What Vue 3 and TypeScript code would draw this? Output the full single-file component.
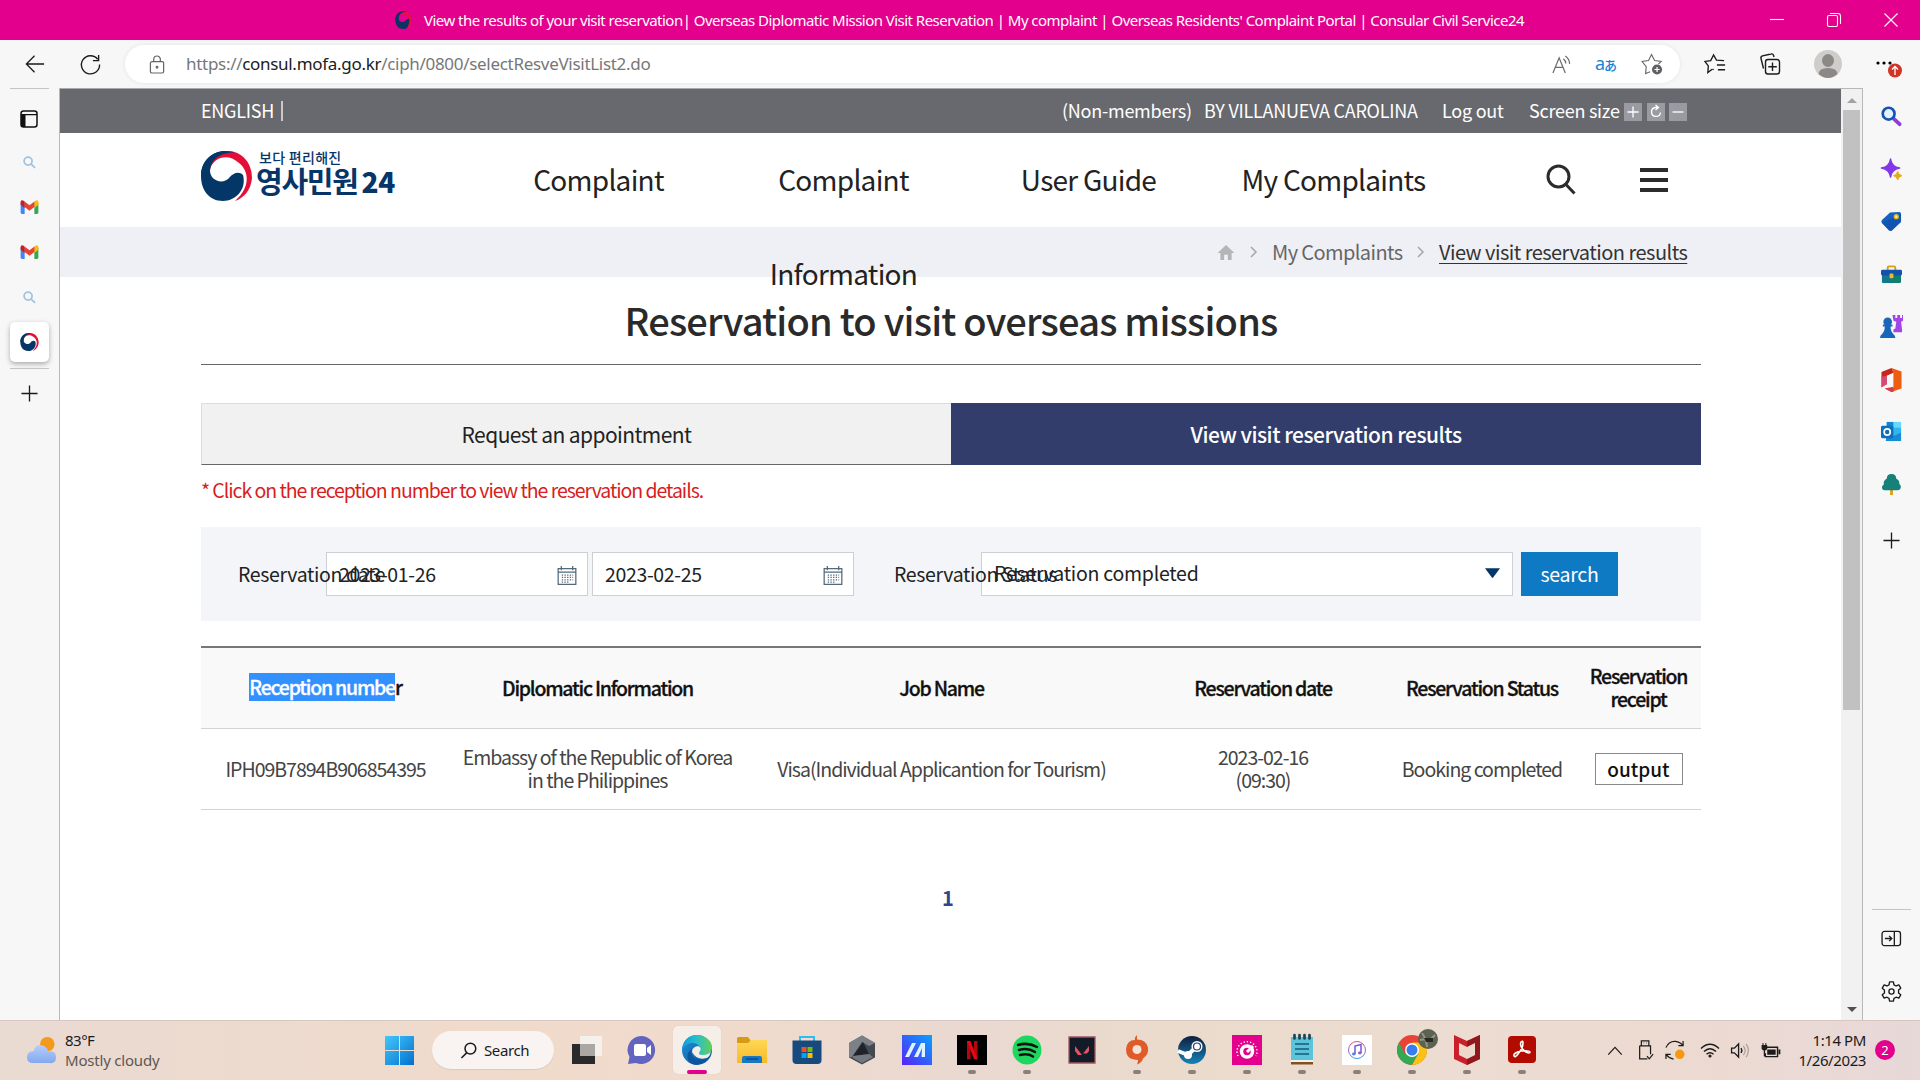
<script setup lang="ts">
interface Column {
  key: string
  width: number
  lines: string[]
}

const columns: Column[] = [
  { key: 'diplomatic', width: 295, lines: ['Diplomatic Information'] },
  { key: 'job', width: 393, lines: ['Job Name'] },
  { key: 'date', width: 250, lines: ['Reservation date'] },
  { key: 'status', width: 188, lines: ['Reservation Status'] },
  { key: 'receipt', width: 125, lines: ['Reservation', 'receipt'] },
]

const dates: string[] = ['2023-01-26', '2023-02-25']
</script>

<template>
  <div class="screen">
    <header class="titlebar">
      <svg class="title-icon" viewBox="0 0 50 50"><path d="M5 25C5 9 17 0 29 0 21 1 14 9 14 18c-1 12 13 16 19 9 4-5 10-7 14-3 0 15-8 26-20 26C13 50 5 39 5 25Z" fill="#0b3465" /><path d="M19 3C38-4 52 10 50 29c-1 11-7 18-13 20 9-14 9-29 0-37C30 5 19 6 14 14c0-5 2-9 5-11Z" fill="#e5123e" /><path d="M5 25C5 10 17 0 29 0q6 0 10 2C26 1 14 7 14 22Z" fill="#0b3465" /></svg>
      <span class="page-title">View the results of your visit reservation| Overseas Diplomatic Mission Visit Reservation | My complaint | Overseas Residents' Complaint Portal | Consular Civil Service24</span>
      <div class="window-controls">
        <svg viewBox="0 0 16 16"><path d="M1 7.500h14" /></svg>
        <svg viewBox="0 0 16 16"><rect x="1.500" y="3.500" width="10" height="11" rx="1.500" /><path d="M4 1.500h8q2.500 0 2.500 2.500v8" /></svg>
        <svg viewBox="0 0 16 16"><path d="M1.500 1.500l13 13M14.500 1.500l-13 13" /></svg>
      </div>
    </header>

    <div class="toolbar">
      <svg class="back line" viewBox="0 0 22 22"><path d="M21 11H1.500M10.500 2 1.500 11l9 9" /></svg>
      <svg class="reload line" viewBox="0 0 22 22"><path d="M18.500 5.500A9.500 9.500 0 1 0 20.500 11M19.500 1v6h-6" /></svg>
      <div class="address">
        <svg class="lock" viewBox="0 0 18 20"><rect x="1.500" y="7" width="14" height="12" rx="1.500" /><path d="M5 7V4.500a3.500 3.500 0 0 1 7 0V7" /><circle cx="8.500" cy="13" r=".9" /></svg>
        <span class="url">https://<b>consul.mofa.go.kr</b>/ciph/0800/selectResveVisitList2.do</span>
        <svg class="addr-icon read" viewBox="0 0 20 20"><path d="M1 19 7.500 3 14 19M3.500 13h8M12 4q2.500 2 2.500 5M14 1q4.500 3 4.500 8.500" /></svg>
        <span class="translate">a<i>あ</i></span>
        <svg class="addr-icon star" viewBox="0 0 24 24"><path d="M10 20.500 5 22.500 5.700 15 1.200 9.300 8.200 8.200 11.500 1.700l3.300 6.500 7.200 1-3 3" /><circle cx="17.500" cy="18" r="5.500" fill="#5f6063" stroke="none" /><path d="M17.500 15.200v5.600M14.700 18h5.600" stroke="#fff" /></svg>
      </div>
      <svg class="fav line" viewBox="0 0 24 22"><path d="M8.500 16.500 4 20 4.500 13 1 8.300 7 7.500 10 1.500l3 5.500 8 .5M13.500 12H22M14.500 17H22M9 16.300l1 .7" /></svg>
      <svg class="collect line" viewBox="0 0 22 22"><path d="M4.500 15.500 2 5.500q-.5-2 1.500-2.600L12 1q2-.5 2.600 1.500L15 4" /><rect x="6.500" y="6.500" width="14" height="14.500" rx="2.500" /><path d="M13.500 9.500v8.500M9.300 13.700h8.500" /></svg>
      <svg class="avatar" viewBox="0 0 28 28"><circle cx="14" cy="14" r="14" fill="#cfcdcb" /><ellipse cx="14" cy="10.500" rx="6" ry="6.500" fill="#8b8886" /><path d="M4.500 24Q5 18 14 18t9.500 6Q19 28 14 28t-9.500-4Z" fill="#8b8886" /></svg>
      <svg class="more" viewBox="0 0 26 30"><circle cx="2" cy="14" r="1.600" /><circle cx="8" cy="14" r="1.600" /><circle cx="14" cy="14" r="1.600" /><circle cx="19" cy="21.500" r="7" fill="#d13425" /><path d="M19 26v-8M16 20.500l3-3 3 3" fill="none" stroke="#fff" stroke-width="1.300" /></svg>
    </div>

    <div class="middle">
      <aside class="tabs-rail">
        <div class="rail-line"></div>
        <svg class="r-panel" viewBox="0 0 18 18"><rect x="1" y="1" width="16" height="16" rx="2.500" fill="none" stroke="#111" stroke-width="1.500" /><path d="M1 4.500h4.500V17H3q-2 0-2-2ZM1 4h16v1.300H1Z" fill="#111" /></svg>
        <svg class="r-search" viewBox="0 0 14 14"><circle cx="5.500" cy="5.500" r="4.300" /><path d="m8.800 8.800 4.200 4" /></svg>
        <svg v-for="n in 2" :key="n" class="r-mail" viewBox="0 0 19 15"><path d="M0 3h4.300v12H1.500Q0 15 0 13.500Z" fill="#4285f4" /><path d="M14.700 3H19v10.500q0 1.500-1.500 1.500h-2.800Z" fill="#34a853" /><path d="M14.700 6V1.500Q19-1.500 19 2.500V5l-4.300 3.500Z" fill="#fbbc04" /><path d="M4.300 7.500v-6l5.200 4 5.200-4v6l-5.200 4Z" fill="#ea4335" /><path d="M0 5V2.500Q0-1.500 4.300 1.500v7Z" fill="#c5221f" /></svg>
        <svg class="r-search last" viewBox="0 0 14 14"><circle cx="5.500" cy="5.500" r="4.300" /><path d="m8.800 8.800 4.200 4" /></svg>
        <div class="active-tab"><svg viewBox="0 0 51 50"><path d="M0 25C0 9 12 0 24 0 16 1 9 9 9 18c-1 12 13 16 19 9 4-5 10-7 14-3 4 15-8 26-20 26C8 50 0 39 0 25Z" fill="#053668" /><path d="M17 2C35-5 51 8 51 27 50 39 43 47 34 50 50 36 48 20 38 12 27 2 13 6 9 18 8 11 11 5 17 2Z" fill="#e40f38" /><path d="M0 25C0 10 12 0 24 0q6 0 10 1.500C21 1 9 7 9 22Z" fill="#053668" /></svg></div>
        <div class="rail-line"></div>
        <svg class="r-plus line" viewBox="0 0 18 18"><path d="M9 .5v17M.5 9h17" /></svg>
      </aside>

      <main class="page">
        <div class="utility">
          <span class="t-english">ENGLISH</span><i class="divider"></i>
          <span class="t-non">(Non-members)</span>
          <span class="t-name">BY VILLANUEVA CAROLINA</span>
          <span class="t-logout">Log out</span>
          <span class="t-size">Screen size</span>
          <svg class="size-btn" viewBox="0 0 18 18"><path d="M9 3.500v11M3.500 9h11" /></svg>
          <svg class="size-btn" viewBox="0 0 18 18"><path d="M10.500 4.500H8.500a4.500 4.500 0 1 0 5 5M8.500 2l3 2.500-3 2.500" /></svg>
          <svg class="size-btn" viewBox="0 0 18 18"><path d="M3.500 9h11" /></svg>
        </div>
        <div class="site-header">
          <div class="logo">
            <svg viewBox="0 0 51 50"><path d="M0 25C0 9 12 0 24 0 16 1 9 9 9 18c-1 12 13 16 19 9 4-5 10-7 14-3 4 15-8 26-20 26C8 50 0 39 0 25Z" fill="#053668" /><path d="M17 2C35-5 51 8 51 27 50 39 43 47 34 50 50 36 48 20 38 12 27 2 13 6 9 18 8 11 11 5 17 2Z" fill="#e40f38" /><path d="M0 25C0 10 12 0 24 0q6 0 10 1.500C21 1 9 7 9 22Z" fill="#053668" /></svg>
            <div class="logo-text"><span class="l1">보다 편리해진</span><span class="l2">영사민원<b>24</b></span></div>
          </div>
          <nav class="nav">
            <span>Complaint</span>
            <span>Complaint<br>Information</span>
            <span>User Guide</span>
            <span>My Complaints</span>
          </nav>
          <svg class="h-search" viewBox="0 0 30 31"><circle cx="12.500" cy="12.500" r="10.500" /><path d="m20 20.500 8.500 9" /></svg>
          <svg class="h-menu" viewBox="0 0 28 24"><path d="M0 2h28M0 12h28M0 22h28" /></svg>
        </div>
        <div class="crumbs">
          <svg class="home" viewBox="0 0 18 16"><path d="M9 0 0 8.500h3V16h4v-5.500h4V16h4V8.500h3Z" fill="#b5b5b8" /></svg>
          <svg class="chev c1" viewBox="0 0 7 12"><path d="m1 1 5 5-5 5" /></svg>
          <span class="c-my">My Complaints</span>
          <svg class="chev c2" viewBox="0 0 7 12"><path d="m1 1 5 5-5 5" /></svg>
          <span class="c-view">View visit reservation results</span>
        </div>

        <section class="content">
          <h1><span>Reservation to visit overseas missions</span></h1>
          <div class="tabs">
            <div class="tab"><span>Request an appointment</span></div>
            <div class="tab on"><span>View visit reservation results</span></div>
          </div>
          <p class="note">* Click on the reception number to view the reservation details.</p>
          <div class="filter">
            <label class="lab1">Reservation date</label>
            <div v-for="d in dates" :key="d" class="date">
              <span>{{ d }}</span>
              <svg viewBox="0 0 20 20"><path d="M.7 2.700h18.600v16.600H.7ZM.7 6.500h18.600M4 0v4.500M16 0v4.500" fill="none" stroke="#52697a" stroke-width="1.300" /><path d="M4.500 9.500h12M4.500 12h12M4.500 14.500h12M4.500 17h8" stroke="#52697a" stroke-width="1.300" stroke-dasharray="1.400 1.400" /></svg>
            </div>
            <label class="lab2">Reservation Status</label>
            <div class="select"><span>Reservation completed</span><svg viewBox="0 0 16 10"><path d="M0 0h16L8.500 10h-1Z" fill="#053668" /></svg></div>
            <div class="search-btn"><span>search</span></div>
          </div>

          <div class="table">
            <div class="thead">
              <div class="cell first"><span class="th"><mark>Reception numbe</mark>r</span></div>
              <div v-for="c in columns" :key="c.key" class="cell" :style="{ width: c.width + 'px' }">
                <span v-for="l in c.lines" :key="l" class="th">{{ l }}</span>
              </div>
            </div>
            <div class="trow">
              <div class="cell first"><span>IPH09B7894B906854395</span></div>
              <div class="cell w2"><span>Embassy of the Republic of Korea</span><span>in the Philippines</span></div>
              <div class="cell w3"><span>Visa(Individual Applicantion for Tourism)</span></div>
              <div class="cell w4"><span>2023-02-16</span><span>(09:30)</span></div>
              <div class="cell w5"><span>Booking completed</span></div>
              <div class="cell w6"><div class="output">output</div></div>
            </div>
          </div>
          <div class="pager">1</div>
        </section>
      </main>

      <div class="scrollbar">
        <i class="up"></i><div class="thumb"></div><i class="down"></i>
      </div>

      <aside class="apps-rail">
        <svg class="a a1" viewBox="0 0 22 22"><path d="m14 14 5.500 5" stroke="#8f3bdf" stroke-width="4" stroke-linecap="round" /><circle cx="8" cy="8" r="6.200" fill="#e2f3fd" stroke="#1554b5" stroke-width="2.800" /></svg>
        <svg class="a a2" viewBox="0 0 22 22"><path d="M10 0q1 8 9.500 9.500Q11 11 10 19 9 11 .5 9.500 9 8 10 0Z" fill="#8238e9" stroke="#8238e9" stroke-width="1.500" stroke-linejoin="round" /><path d="M17.500 13q.5 3.500 4.500 4.500-4 .7-4.500 4.500-.7-3.800-4.500-4.500 3.800-1 4.500-4.500Z" fill="#e4a91b" stroke="#e4a91b" /></svg>
        <svg class="a a3" viewBox="0 0 22 22"><path d="M9.500 1.500 19 1q2 0 2 2v8.500L12 20q-2 2-4 0l-7-7.500q-1.500-1.500 0-3Z" fill="#1561c2" /><path d="M1 12.500 20.500 3v8.500L12 20q-2 2-4 0Z" fill="#0d479e" opacity=".5" /><circle cx="16" cy="6" r="2" fill="#fff0a0" stroke="#e5b51d" stroke-width="1.500" /></svg>
        <svg class="a a4" viewBox="0 0 22 22"><path d="M7 7V4q0-1.500 1.500-1.500h5Q15 2.500 15 4v3" fill="none" stroke="#d99f16" stroke-width="2" /><rect x="1" y="10" width="20" height="10" rx="1.500" fill="#10806d" /><path d="M1 10h11v10H1Z" fill="#156fb0" opacity=".5" /><rect x="0" y="6" width="22" height="6" rx="1.500" fill="#1251ae" /><rect x="9" y="10" width="4" height="5" rx="1" fill="#eebc29" /></svg>
        <svg class="a a5" viewBox="0 0 24 24"><path d="M13 0h3v3h2V0h3v3h2V0h1v6l-2 1 1 8v3h-9v-3l2-1 1-7-3-1Z" fill="#a445e8" /><circle cx="8" cy="7" r="4.500" fill="#1766bb" /><path d="M3 10h10v2h-2q0 5 3 8 2 1 2 4H0q0-3 2-4 3-3 3-8H3Z" fill="#1766bb" /></svg>
        <svg class="a a6" viewBox="0 0 22 25"><path d="m11 0 10.500 3.500v18L11 25l-7-3.500 9-.5V5Z" fill="#ed5d0f" /><path d="M11 0 13 5 6 8v9l-5.500 3V4Z" fill="#c72518" /><path d="M.5 9v11L6 17V8Z" fill="#d8497a" /><path d="m4 21.500 9-2V25h-2Z" fill="#d93a50" /></svg>
        <svg class="a a7" viewBox="0 0 22 22"><path d="M6 1h15v20H6Z" fill="#30b6ed" /><path d="M6 1h7v6H6Z" fill="#1685d1" /><path d="M13 1h8v6h-8Z" fill="#67d9fa" /><path d="m6 13 7 3 8-4v9H5Z" fill="#188bd8" /><rect x="0" y="5" width="13" height="13" rx="1.500" fill="#106ebe" /><circle cx="6.500" cy="11.500" r="3.200" fill="none" stroke="#fff" stroke-width="1.800" /></svg>
        <svg class="a a8" viewBox="0 0 22 22"><path d="M9.500 15h3v7h-3Z" fill="#dba11d" /><path d="M11 0q5 0 5 5 4 2 3 5 3 3 1 6-1 1-3 1H4q-3 0-3-3 0-2 2-3-1-4 3-6 0-5 5-5Z" fill="#168179" /></svg>
        <svg class="r-plus line a9" viewBox="0 0 18 18"><path d="M9 .5v17M.5 9h17" /></svg>
        <div class="apps-bottom">
          <div class="rail-line"></div>
          <svg class="line panel-out" viewBox="0 0 22 18"><rect x="1" y="1.500" width="19.500" height="15" rx="2.500" /><path d="M14 2v14M4 9h7M8.500 6.200 11.300 9l-2.800 2.800" /></svg>
          <svg class="line gear" viewBox="0 0 22 22"><path d="M9 1h4l.6 3 2.200 1.200L18.700 4l2 3.500-2.300 2v3l2.300 2-2 3.500-2.900-1-2.200 1.200L13 21H9l-.6-2.800L6.200 17l-2.900 1-2-3.500 2.300-2v-3l-2.300-2 2-3.500 2.900 1.200L8.400 4Z" stroke-linejoin="round" /><circle cx="11" cy="11" r="2.700" /></svg>
        </div>
      </aside>
    </div>

    <footer class="taskbar">
      <div class="weather">
        <svg viewBox="0 0 32 30"><defs><linearGradient id="cl" x2="0" y2="1"><stop stop-color="#b7cdfa" /><stop offset="1" stop-color="#83a8ef" /></linearGradient></defs><circle cx="22" cy="8.500" r="7.500" fill="#f39a1c" /><path d="M7 28q-6 0-6-6t7-6.500Q10 7 18 10q4 1.500 5 6 8-1 8 6t-7 6Z" fill="url(#cl)" /></svg>
        <div class="w-text"><span class="deg">83°F</span><span class="cond">Mostly cloudy</span></div>
      </div>
      <div class="start"><svg viewBox="0 0 29 29"><defs><linearGradient id="win" x2="1" y2="1"><stop stop-color="#43c7fb" /><stop offset="1" stop-color="#0370cf" /></linearGradient></defs><path d="M0 0h14v14H0ZM15 0h14v14H15ZM0 15h14v14H0ZM15 15h14v14H15Z" fill="url(#win)" /></svg></div>
      <div class="task-search"><svg viewBox="0 0 18 18"><circle cx="11" cy="7" r="5.700" /><path d="M7 11.500 1.500 17" /></svg><span>Search</span></div>
      <div class="apps">
        <div class="app"><svg viewBox="0 0 30 30"><path d="M0 9h23v20H0Z" fill="#2b2a2a" /><path d="M8 1h22v20H8Z" fill="#f5f4f3" opacity=".85" /><path d="M8 9h15v12H8Z" fill="#aaa7a5" /></svg></div>
        <div class="app"><svg viewBox="0 0 30 30"><path d="M15 1a14 14 0 1 1-6 27l-8 1 1.500-7A14 14 0 0 1 15 1Z" fill="#6264c0" /><rect x="7" y="9" width="12" height="12" rx="2" fill="#fff" /><path d="m20 13 4-3v10l-4-3Z" fill="#fff" /></svg></div>
        <div class="app current"><svg viewBox="0 0 30 30"><defs><linearGradient id="e1" x2="1"><stop stop-color="#159be0" /><stop offset=".5" stop-color="#29bfcb" /><stop offset="1" stop-color="#65d052" /></linearGradient><linearGradient id="e2" x2="1" y2="1"><stop stop-color="#2098dc" /><stop offset="1" stop-color="#0b4a95" /></linearGradient></defs><circle cx="15" cy="15" r="15" fill="url(#e2)" /><path d="M0 15C1 5 7 0 15 0c8 0 15 6 15 12 0 7-5 9-9 8-4 0-5-2-3-4 2-9-13-12-18-1Z" fill="url(#e1)" /><path d="M10 17q0-5 6-6 4 2 2 5-3 4 3 4 5 0 8-3-1 4-4 6-10 3-15-6Z" fill="#f5eee8" /><path d="M10 14c-3 7 4 14 15 9-3 5-9 8-15 6C4 26 4 17 10 14Z" fill="#0e559f" /></svg><i></i></div>
        <div class="app"><svg viewBox="0 0 30 30"><defs><linearGradient id="fo" x2="0" y2="1"><stop stop-color="#ffd757" /><stop offset="1" stop-color="#f8ba24" /></linearGradient></defs><path d="M0 3.500Q0 2 1.500 2H11l3 4v3H0Z" fill="#d89a10" /><path d="M0 8h11l3-3h16v23H0Z" fill="url(#fo)" /><path d="M5 28v-5q0-2 2-2h16q2 0 2 2v5Z" fill="#1878c4" /><path d="M9 24h12" stroke="#0a4b8c" stroke-width="1.500" /></svg></div>
        <div class="app"><svg viewBox="0 0 30 30"><path d="M8 6V2h14v4" fill="none" stroke="#36b9ed" stroke-width="2" /><path d="M0.500 5.500h29V25q0 4-4 4h-21q-4 0-4-4Z" fill="#174a7e" /><path d="M9.500 12h5v5h-5Z" fill="#f25022" /><path d="M15.500 12h5v5h-5Z" fill="#7fba00" /><path d="M9.500 18h5v5h-5Z" fill="#00a4ef" /><path d="M15.500 18h5v5h-5Z" fill="#ffb900" /></svg></div>
        <div class="app"><svg viewBox="0 0 30 30"><path d="M15 .5 28 8v14.500L15 29.500 2 22.500V8Z" fill="#454a50" /><path d="M15 .5 28 8l-6 3-7-4-10 15-3 .5V8Z" fill="#7c8187" /><path d="m16 7 6 12-16 2Z" fill="#202329" /><path d="m6 21 16-2 4 3-11 6-9-5Z" fill="#72787e" /></svg></div>
        <div class="app"><svg viewBox="0 0 30 30"><defs><linearGradient id="as" x1="0" y1="1" x2="1" y2="0"><stop stop-color="#5b22f5" /><stop offset="1" stop-color="#05a4ff" /></linearGradient></defs><path d="M0 0h30v30H0Z" fill="url(#as)" /><path d="m3 22 7-14h4L7 22ZM12 22l7-14h4v14h-3.500l.5-9-4 9Z" fill="#dff2ff" /></svg></div>
        <div class="app run"><svg viewBox="0 0 30 30"><path d="M0 0h30v30H0Z" /><path d="M10 6h3.500v18L10 24.500ZM17 6h3.500v18.500L17 24Z" fill="#b20710" /><path d="M10 6h3.500l7 18.500L17 24Z" fill="#e50914" /></svg><i></i></div>
        <div class="app run"><svg viewBox="0 0 30 30"><circle cx="15" cy="15" r="14.500" fill="#1ed760" /><path d="M6 10q10-3 19 2M7 15q9-2.500 16 2M8 20q8-2 13 1.500" fill="none" stroke="#111" stroke-width="2.500" stroke-linecap="round" /></svg><i></i></div>
        <div class="app"><svg viewBox="0 0 30 30"><path d="M2 2h26v26H2Z" fill="#121b27" stroke="#a2555f" stroke-width="1.300" /><path d="m8 11 7 9h-4l-3-4ZM22 11v5l-2 2.500h-4Z" fill="#e55363" /></svg></div>
        <div class="app run"><svg viewBox="0 0 30 30"><path d="M15 0q-3 3-2 5Q5 5 4 14q0 8 6 10 4 1 6 1 0 2-1 4.500 5-2 6-6 6-4 5-11-2-8-11-8 0-3 0-4.500Z" fill="#df5c29" /><circle cx="15" cy="14.500" r="4.500" fill="#f3e3d6" /></svg><i></i></div>
        <div class="app run"><svg viewBox="0 0 30 30"><defs><linearGradient id="st" x2="0" y2="1"><stop stop-color="#111d3f" /><stop offset="1" stop-color="#1484b8" /></linearGradient></defs><circle cx="15" cy="15" r="14" fill="url(#st)" /><path d="m1 16 10 4 7-7" fill="none" stroke="#fff" stroke-width="4" /><circle cx="20" cy="11.500" r="5.500" fill="#fff" /><circle cx="20" cy="11.500" r="3.500" fill="#fff" stroke="#243c64" stroke-width="1.200" /><circle cx="11" cy="20" r="4" fill="#fff" /></svg><i></i></div>
        <div class="app run"><svg viewBox="0 0 30 30"><path d="M0 0h30v30H0Z" fill="#e3008c" /><circle cx="15" cy="16.500" r="5.500" fill="none" stroke="#fff" stroke-width="3.500" /><path d="m15 17 6-6" stroke="#fff" stroke-width="3" /><path d="M6 21a10 10 0 1 1 18 0" fill="none" stroke="#fff" stroke-width="1.500" stroke-dasharray="1.300 2" /></svg><i></i></div>
        <div class="app run"><svg viewBox="0 0 30 30"><path d="M4 26h22v3.500H4Z" fill="#85501f" /><path d="M4 25h22v2H4Z" fill="#f3f0eb" /><path d="M4 2h22v23H4Z" fill="#5bc4da" /><path d="M8 9h14M8 14h14M8 19h14" stroke="#135c78" stroke-width="1.700" /><path d="M7.500 0v3.500M12.500 0v3.500M17.500 0v3.500M22.500 0v3.500" stroke="#184558" stroke-width="2.700" stroke-linecap="round" /></svg><i></i></div>
        <div class="app run"><svg viewBox="0 0 30 30"><defs><linearGradient id="it" x2="0" y2="1"><stop stop-color="#f23e7c" /><stop offset="1" stop-color="#3f9af4" /></linearGradient></defs><path d="M0 0h30v30H0Z" fill="#fff" /><circle cx="15" cy="15" r="8.500" fill="none" stroke="url(#it)" /><path d="M13 19v-8l6-1.500V18" fill="none" stroke="#7359d8" stroke-width="1.500" /><ellipse cx="11.800" cy="19" rx="1.800" ry="1.400" fill="#557ce6" /><ellipse cx="17.800" cy="18" rx="1.800" ry="1.400" fill="#8c56d4" /></svg><i></i></div>
        <div class="app run"><svg viewBox="0 0 30 30"><circle cx="15" cy="15" r="15" fill="#ea4335" /><path d="M2 7.500A15 15 0 0 0 14.500 30L22 19l-14 0Z" fill="#34a853" /><path d="M15 30A15 15 0 0 0 28 7.500H15l6.500 11Z" fill="#fbc116" /><circle cx="15" cy="15" r="7" fill="#fff" /><circle cx="15" cy="15" r="5.500" fill="#377df0" /></svg><svg class="chrome-user" viewBox="0 0 20 20"><circle cx="10" cy="10" r="10" fill="#5d6150" /><path d="M4 4q4 5 5 14M17 6l-6 6M2 11l6-1" stroke="#96958a" stroke-width="2" fill="none" /><path d="M6 9h9v4H8Z" fill="#252922" /></svg><i></i></div>
        <div class="app run"><svg viewBox="0 0 30 30"><path d="m2 0 13 6L28 0v24l-13 6L2 24Z" fill="#c9202b" /><path d="m15 6 13-6v24l-13 6v-6l8-4V8l-8 4Z" fill="#8f171e" /><path d="m7 8 8 4 8-4v12l-8 4-8-4Z" fill="#ecd9cc" /></svg><i></i></div>
        <div class="app run"><svg viewBox="0 0 30 30"><rect x="1" y="1" width="28" height="27" rx="4" fill="#b30b00" /><path d="M7 21q-1-3 7-5 8-1 9 1 0 2-4 0-7-5-5-10 2-2 2 1 0 5-5 11-3 4-4 2Z" fill="none" stroke="#fff" stroke-width="1.600" /></svg><i></i></div>
      </div>
      <div class="tray">
        <svg class="t1" viewBox="0 0 16 10"><path d="m.5 9.500 7.500-8 7.500 8" /></svg>
        <svg class="t2" viewBox="0 0 16 21"><path d="M2.500 6V.7h8V6M5 3h.5M8 3h.5M.7 6h11.600v9M9 20H.7V6M8.500 17l2.500 3 4-5" /></svg>
        <svg class="t3" viewBox="0 0 21 21"><path d="M1 8Q4 1 11 1.500q5 .5 8 4.500M19 1v5h-5M1 20v-5h5M1 15q3 4 8 5" /><circle cx="15.500" cy="15" r="5" fill="#f7990c" stroke="none" /></svg>
        <svg class="t4" viewBox="0 0 20 15"><path d="M1 5.500q9-8.500 18 0M4 8.500q6-5.500 12 0M6.500 11.200q3.500-3 7 0" stroke-width="1.500" /><circle cx="10" cy="13" r="1.600" fill="#222" stroke="none" /></svg>
        <svg class="t5" viewBox="0 0 20 16"><path d="M1 5.500h3L8.500 1v14L4 10.500H1ZM11 5.500q2 2.500 0 5" stroke-width="1.400" /><path d="M13.500 3q4 5 0 10M16.500 1q5 7 0 14" stroke="#aaa09a" /></svg>
        <svg class="t6" viewBox="0 0 21 16"><path d="M6.500 4.500H18v10H5V11" stroke-width="1.500" /><path d="M7 7h9v5.500H7ZM19 7h2v5h-2ZM1 2h6v4q-1 2-3 2T1 6ZM2 0h1v3H2ZM5 0h1v3H5ZM3.300 7h1.400v7H3.300Z" fill="#1b1b1b" stroke="none" /></svg>
        <div class="clock"><span class="time">1:14 PM</span><span class="day">1/26/2023</span></div>
        <div class="badge">2</div>
      </div>
    </footer>
  </div>
</template>

<style>
body { margin: 0; overflow: hidden; }
</style>

<style scoped>
* { box-sizing: border-box; }
.screen { width: 1920px; height: 1080px; display: flex; flex-direction: column; overflow: hidden; background: #f7f7f7; font-family: "Noto Sans", "Open Sans", sans-serif; color: #1b1b1b; }
svg { display: block; flex: none; overflow: visible; }
span { white-space: nowrap; }
.line { fill: none; stroke: #1b1b1b; stroke-width: 1.4; }

.titlebar { height: 40px; flex: none; display: flex; align-items: center; background: #e3008c; color: #fff; padding-left: 393px; }
.title-icon { width: 19px; height: 18px; margin-right: 12px; }
.page-title { width: 1345px; font-size: 15px; letter-spacing: -0.53px; line-height: 20px; padding-bottom: 1px; }
.window-controls { display: flex; gap: 41px; }
.window-controls svg { width: 16px; height: 16px; fill: none; stroke: #fff; stroke-width: 1.1; }

.toolbar { height: 48px; flex: none; display: flex; align-items: center; padding-left: 24px; background: #f7f7f7; }
.back { width: 22px; height: 20px; }
.reload { width: 21px; height: 21px; margin-left: 34px; }
.address { width: 1555px; height: 38px; margin-left: 24px; border-radius: 19px; background: #fff; box-shadow: 0 0 4px #e4e4e4; display: flex; align-items: center; padding-left: 24px; }
.lock { width: 17px; height: 19px; fill: none; stroke: #666; stroke-width: 1.3; }
.url { width: 1366px; margin-left: 20px; color: #777; font-size: 17px; letter-spacing: -0.3px; line-height: 24px; }
.url b { font-weight: 400; color: #1b1b1b; }
.addr-icon { fill: none; stroke: #6c6c6c; stroke-width: 1.3; }
.read { width: 19px; height: 19px; }
.translate { width: 24px; margin: -2px 0 0 24px; color: #1583d8; font-size: 18px; line-height: 24px; letter-spacing: -1px; }
.translate i { font: 500 13px "Noto Sans CJK JP", sans-serif; }
.star { width: 22px; height: 22px; margin-left: 22px; }
.fav { width: 23px; height: 22px; margin-left: 24px; }
.collect { width: 22px; height: 22px; margin-left: 32px; }
.avatar { width: 28px; height: 28px; margin-left: 33px; }
.more { width: 26px; height: 30px; margin-left: 34px; }

.middle { flex: 1; min-height: 0; display: flex; }
.tabs-rail { width: 60px; border-right: 1px solid #b8b8b8; display: flex; flex-direction: column; align-items: center; }
.rail-line { width: 39px; height: 1px; background: #c4c4c4; flex: none; }
.r-panel { width: 18px; height: 18px; margin: 21px 1px 0 0; }
.r-search { width: 13px; height: 13px; margin-top: 28px; fill: none; stroke: #9fc3e2; stroke-width: 1.9; }
.r-mail { width: 19px; height: 14px; margin-top: 31px; }
.r-search.last { margin-top: 32px; }
.active-tab { width: 39px; height: 40px; margin: 18px 0 6px; border-radius: 5px; background: #fff; box-shadow: 0 2px 5px #aaa; display: flex; align-items: center; justify-content: center; }
.active-tab svg { width: 19px; height: 18px; }
.r-plus { width: 17px; height: 17px; margin-top: 16px; }

.page { width: 1781px; border-top: 1px solid #a9a9a9; background: #fff; font-family: "Noto Sans CJK KR", sans-serif; color: #222; flex: none; }
.utility { height: 44px; padding: 0 0 2px 141px; background: #68696e; color: #fff; display: flex; align-items: center; font-size: 18px; line-height: 26px; letter-spacing: -0.25px; }
.utility span { flex: none; }
.t-english { width: 80px; }
.divider { width: 2px; height: 20px; background: #c9c9cb; margin: 2px 779px 0 0; }
.t-non { width: 142px; }
.t-name { width: 238px; }
.t-logout { width: 87px; }
.t-size { width: 95px; }
.size-btn { width: 18px; height: 18px; margin: 4px 4.500px 0 0; background: #9a9ba2; fill: none; stroke: #fff; stroke-width: 1.3; }
.site-header { height: 94px; padding-left: 141px; display: flex; }
.logo { width: 275px; padding-top: 18px; display: flex; }
.logo > svg { width: 51px; height: 50px; }
.logo-text { margin: -1px 0 0 4px; color: #073568; display: flex; flex-direction: column; }
.l1 { font-size: 14px; line-height: 14px; font-weight: 500; padding-left: 3px; letter-spacing: 0.3px; }
.l2 { font-size: 29px; line-height: 33px; font-weight: 700; letter-spacing: -1.3px; }
.l2 b { margin-left: 4px; letter-spacing: -0.4px; font-size: 28px; }
.nav { width: 980px; display: flex; position: relative; z-index: 1; }
.nav span { width: 245px; text-align: center; font-size: 28px; line-height: 94px; letter-spacing: -0.74px; position: relative; top: -1px; }
.h-search { width: 30px; height: 31px; margin: 31px 0 0 90px; fill: none; stroke: #2c2c2c; stroke-width: 3; }
.h-menu { width: 28px; height: 24px; margin: 35px 0 0 64px; stroke: #2c2c2c; stroke-width: 4; }
.crumbs { height: 50px; background: #eff0f5; padding-left: 1157px; display: flex; align-items: center; font-size: 20px; line-height: 28px; letter-spacing: -0.53px; }
.home { width: 18px; height: 15px; }
.chev { width: 7px; height: 12px; fill: none; stroke: #a7a7aa; stroke-width: 1.5; }
.c1 { margin: 0 15px 0 15px; }
.c2 { margin: 0 15px 0 15px; }
.c-my { width: 130px; color: #666; letter-spacing: -0.6px; }
.c-view { text-decoration: underline; text-decoration-thickness: 1px; text-underline-offset: 3px; color: #333; }

.content { width: 1500px; margin-left: 141px; }
h1 { height: 88px; margin: 0; border-bottom: 1px solid #666; display: flex; justify-content: center; font-size: 38px; font-weight: 500; line-height: 86px; letter-spacing: -0.8px; color: #2a2a2a; }
.tabs { display: flex; margin-top: 38px; height: 62px; text-align: center; }
.tab { width: 750px; border: 1px solid #ddd; border-right: 0; border-bottom-color: #666; background: #f1f1f1; font-size: 21px; line-height: 61px; letter-spacing: -0.57px; }
.tab.on { background: #333d6b; border: 0; color: #fff; font-weight: 500; line-height: 63px; letter-spacing: -0.5px; }
.note { margin: 0; height: 62px; padding-top: 11px; color: #d91d1d; font-size: 19.5px; line-height: 28px; letter-spacing: -1.05px; white-space: nowrap; }
.filter { height: 94px; background: #f3f5f9; display: flex; align-items: center; padding-left: 37px; font-size: 19.5px; letter-spacing: -0.35px; }
.filter label { position: relative; z-index: 1; white-space: nowrap; padding-bottom: 2px; }
.lab1 { width: 88px; }
.lab2 { width: 87px; margin-left: 36px; }
.date { width: 262px; height: 44px; margin-right: 4px; border: 1px solid #cdcfd4; background: #fff; display: flex; align-items: center; justify-content: space-between; padding: 0 10px 0 12px; flex: none; }
.date span { padding-bottom: 2px; }
.date svg { width: 20px; height: 19px; margin-top: 3px; }
.select { width: 532px; height: 44px; border: 1px solid #cdcfd4; background: #fff; display: flex; align-items: center; justify-content: space-between; padding: 0 12px; flex: none; }
.select span { margin-top: -3px; letter-spacing: -0.25px; }
.select svg { width: 15px; height: 10px; margin-top: -3px; }
.search-btn { width: 97px; height: 44px; margin-left: 8px; background: #0e7ac4; color: #fff; text-align: center; line-height: 44px; letter-spacing: -0.3px; }
.table { margin-top: 25px; border-top: 2px solid #777; }
.thead, .trow { display: flex; border-bottom: 1px solid #d3d3d3; }
.thead { height: 81px; background: #f9f9f9; }
.trow { height: 81px; color: #444; }
.cell { display: flex; flex-direction: column; align-items: center; justify-content: center; font-size: 19.5px; line-height: 23px; letter-spacing: -1px; padding-bottom: 2px; flex: none; }
.first { width: 249px; }
.w2 { width: 295px; }
.w3 { width: 393px; }
.w4 { width: 250px; }
.w5 { width: 188px; }
.w6 { width: 125px; padding-bottom: 0; }
.th { font-weight: 500; color: #111; letter-spacing: -1.22px; -webkit-text-stroke: 0.3px currentColor; }
mark { display: inline-block; height: 28px; line-height: 28px; background: #3390ff; color: #fff; }
.output { width: 88px; height: 32px; border: 1px solid #888; text-align: center; font-size: 19px; line-height: 29px; letter-spacing: 0; color: #111; font-weight: 500; }
.pager { margin-top: 74px; padding-right: 6px; text-align: center; color: #2f4690; font-size: 20px; font-weight: 700; line-height: 28px; }

.scrollbar { width: 22px; border-top: 1px solid #b8b8b8; border-right: 1px solid #b8b8b8; background: #f1f1f1; display: flex; flex-direction: column; align-items: center; flex: none; }
.up { border: 5px solid transparent; border-top: 0; border-bottom: 5px solid #a3a3a3; margin: 9px 0 7px; }
.thumb { width: 17px; height: 600px; background: #c1c1c1; flex: none; }
.down { border: 5px solid transparent; border-bottom: 0; border-top: 5px solid #505050; margin-top: auto; margin-bottom: 8px; }
.apps-rail { width: 57px; display: flex; flex-direction: column; align-items: center; }
.a { width: 21px; height: 21px; margin-top: 32px; }
.a1 { margin-top: 18px; }
.a3 { margin-top: 31px; }
.a4 { margin-top: 32px; }
.a5 { width: 23px; height: 23px; margin-top: 30px; }
.a6 { height: 24px; margin-top: 30px; }
.a7 { margin-top: 29px; }
.a9 { margin-top: 37px; }
.apps-bottom { margin-top: auto; display: flex; flex-direction: column; align-items: center; padding-bottom: 18px; }
.panel-out { width: 21px; height: 17px; margin-top: 20px; }
.gear { width: 21px; height: 21px; margin-top: 34px; }

.taskbar { height: 60px; flex: none; display: flex; align-items: center; border-top: 1px solid #d5c8c1; padding-bottom: 1px; background: linear-gradient(90deg, #e9dad2 0, #eddacf 12%, #f0dbcb 28%, #efdacd 40%, #ead9d1 50%, #eadbcc 62%, #ecdcd1 75%, #ecdad2 90%, #e7d8d9 100%); }
.weather { width: 385px; padding-left: 26px; display: flex; align-items: center; }
.weather svg { width: 31px; height: 29px; }
.w-text { margin-left: 8px; display: flex; flex-direction: column; font-size: 15px; line-height: 20px; letter-spacing: -0.5px; }
.cond { color: #5d5753; letter-spacing: -0.2px; }
.start { width: 47px; }
.start svg { width: 29px; height: 29px; }
.task-search { width: 122px; height: 38px; border-radius: 19px; background: #f9f4f1; box-shadow: 0 1px 1px #d9cac2; display: flex; align-items: center; padding-left: 28px; font-size: 15px; letter-spacing: -0.4px; }
.task-search svg { width: 17px; height: 17px; margin-right: 7px; fill: none; stroke: #1b1b1b; stroke-width: 1.6; }
.apps { display: flex; margin-left: 9px; gap: 7px; }
.app { width: 48px; height: 48px; border-radius: 5px; position: relative; display: flex; align-items: center; justify-content: center; }
.app > svg { width: 30px; height: 30px; }
.app.current { background: #f6eee9; box-shadow: 0 0 1px #cfc2bb; }
.app i { position: absolute; bottom: 0; left: 20px; width: 8px; height: 4px; border-radius: 2px; background: #8b7f7a; }
.app.current i { left: 14px; width: 20px; background: #e3008c; }
.app > .chrome-user { position: absolute; width: 20px; height: 20px; right: -2px; top: 3px; }
.tray { display: flex; align-items: center; margin-left: 61px; }
.tray svg { fill: none; stroke: #1b1b1b; stroke-width: 1.3; }
.t1 { width: 16px; height: 9px; }
.t2 { width: 15px; height: 20px; margin-left: 16px; }
.t3 { width: 20px; height: 20px; margin-left: 11px; }
.t4 { width: 20px; height: 15px; margin-left: 15px; }
.t5 { width: 20px; height: 15px; margin-left: 10px; }
.t6 { width: 21px; height: 15px; margin-left: 10px; }
.clock { width: 85px; display: flex; flex-direction: column; align-items: flex-end; font-size: 15px; line-height: 20px; letter-spacing: -0.4px; }
.badge { width: 20px; height: 20px; margin-left: 9px; border-radius: 50%; background: #e3008c; color: #fff; text-align: center; font-size: 13px; line-height: 20px; }
</style>
